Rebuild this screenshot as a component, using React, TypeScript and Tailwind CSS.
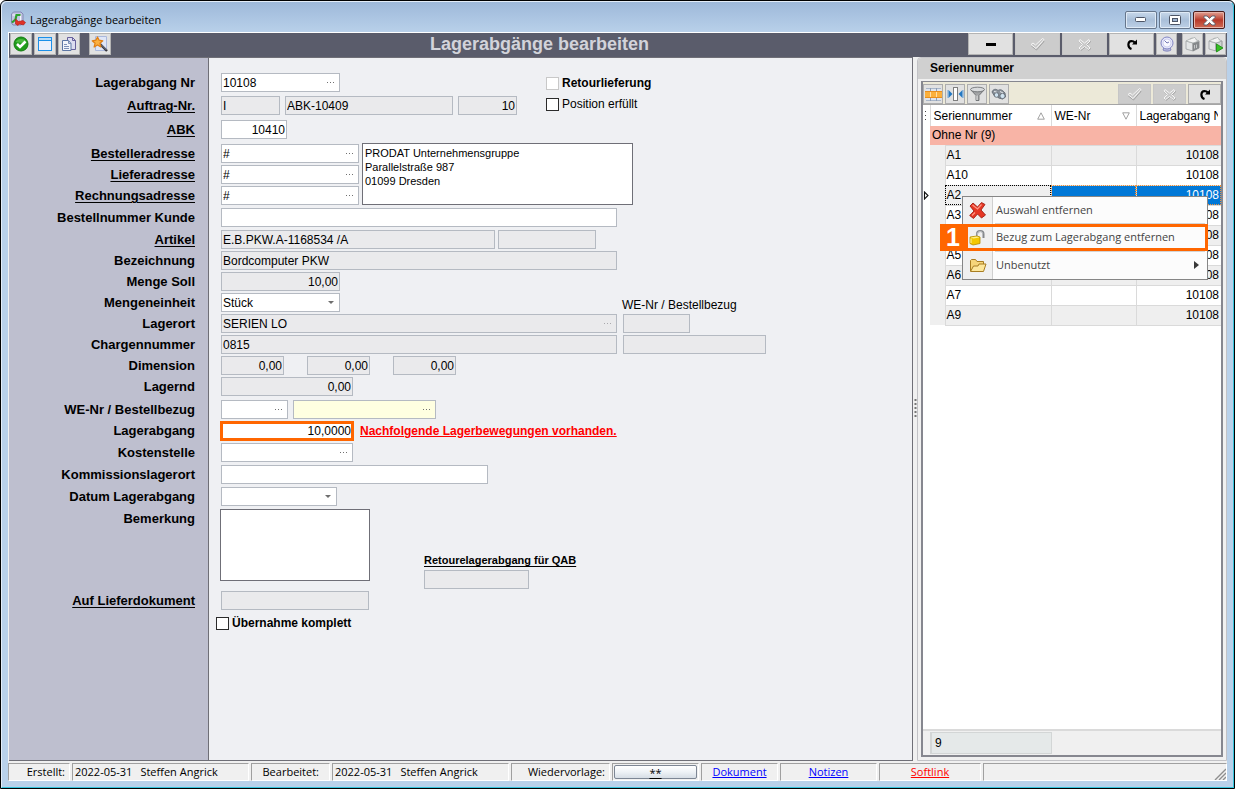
import type { ReactNode } from "react";

const ARIAL = "font-['Liberation_Sans',Arial,sans-serif]";
const SEGOE = "font-['Open_Sans','Segoe_UI',sans-serif]";

/* ---------- icons ---------- */

const AppIcon = () => (
  <svg width="16" height="16" viewBox="0 0 16 16" aria-hidden="true">
    <path d="M1.500 3 3.500 1h7.500l2 2v9.500l-2 1.500H3l-1.500-2z" fill="#c3c6e2" stroke="#8388b4" />
    <path d="M2.500 4h8v9" fill="none" stroke="#f4f4fb" />
    <path d="M2 11.500 5.500 8.500 6.500 4h4" fill="none" stroke="#2da12d" strokeWidth="2.200" />
    <path d="M5.500 13V8l3 2.500 4.500-1 2.500 2-2 2.500-4-1-1.500 1.500z" fill="#e03226" stroke="#a81a12" strokeWidth=".6" />
  </svg>
);
const OkIcon = () => (
  <svg width="16" height="16" viewBox="0 0 16 16" aria-hidden="true">
    <circle cx="8" cy="8" r="7" fill="#1f9c1a" stroke="#137a10" />
    <path d="M2.500 6a6 5 0 0 1 11 0 14 9 0 0 1-11 0z" fill="#5cc84e" opacity=".7" />
    <path d="m4 8 3 3 5.500-5.500" fill="none" stroke="#fff" strokeWidth="2.600" />
  </svg>
);
const WindowIcon = () => (
  <svg width="16" height="16" viewBox="0 0 16 16" aria-hidden="true">
    <rect x="1.500" y="1.500" width="13" height="13" fill="#eceffb" stroke="#1c8fe8" />
    <path d="M2 2h12v2H2z" fill="#b8dcf8" />
    <path d="M2 4.500h12" stroke="#1c8fe8" />
  </svg>
);
const CopyIcon = () => (
  <svg width="16" height="16" viewBox="0 0 16 16" aria-hidden="true">
    <path d="M6.500 1.500h5l3 3v9h-8z" fill="#dcdcf0" stroke="#67619c" />
    <path d="M11.500 1.500v3h3" fill="none" stroke="#67619c" />
    <path d="M1.500 4.500h6l2.500 3v7H1.500z" fill="#f2f5fb" stroke="#5d76a4" />
    <path d="M7.500 4.500v3H10M3 8.500h3M3 10.500h5M3 12.500h5" fill="none" stroke="#7c90b8" />
  </svg>
);
const WizardIcon = () => (
  <svg width="18" height="18" viewBox="0 0 18 18" aria-hidden="true">
    <path d="M4.500 1.500h11v14h-11z" fill="#dfe6f7" stroke="#aab8dc" />
    <path d="m9 9 7 7" stroke="#33333b" strokeWidth="2.400" />
    <path d="m10 9.500 5.500 5.500" stroke="#a5a9b4" strokeWidth=".7" />
    <path d="m6.500 2 1.500 3.100 3.800.7-2.900 2.400 1 3.800-3.400-2.100L3.100 12l1-3.800-2.900-2.400 3.800-.7z" fill="#fbb040" stroke="#e07f14" strokeWidth="1.200" strokeLinejoin="round" />
  </svg>
);
const CheckOutline = () => (
  <svg width="15" height="14" viewBox="0 0 15 14" aria-hidden="true">
    <path d="m1.500 8 2-1.500 2.500 2 6.500-6 1.500 1L6.500 12z" fill="none" stroke="#a2a2a2" transform="translate(0 1)" />
    <path d="m1 7.500 2-1.500 2.500 2L12.500 1.500l1.500 1L6 11.500z" fill="#c7c7c7" stroke="#f6f6f6" />
  </svg>
);
const CrossOutline = () => (
  <svg width="13" height="13" viewBox="0 0 13 13" aria-hidden="true">
    <path d="M2 1.500 6.500 5 11 1.500l1 1.500-3.500 3.500L12 10l-1.500 1.500-4-3-4 3L1 10l3.500-3.500L1 3z" fill="#c5c5c5" stroke="#a2a2a2" transform="translate(.5 .8)" />
    <path d="M2 1.500 6.500 5 11 1.500l1 1.500-3.500 3.500L12 10l-1.500 1.500-4-3-4 3L1 10l3.500-3.500L1 3z" fill="#c9c9c9" stroke="#f6f6f6" />
  </svg>
);
const RefreshIcon = () => (
  <svg width="12" height="12" viewBox="0 0 12 12" aria-hidden="true">
    <path d="M5.500 11C1.200 9.500 1.500 3.200 5.500 3c1.400 0 2.400.4 3.200 1.500" fill="none" stroke="#000" strokeWidth="2.200" />
    <path d="M11 1.500v5H6z" fill="#000" />
  </svg>
);
const ClockIcon = () => (
  <svg width="16" height="16" viewBox="0 0 16 16" aria-hidden="true">
    <path d="M4 14c2 1.500 6 1.500 8 0l-1-2.500H5z" fill="#b9bbe0" stroke="#8286bd" />
    <circle cx="8" cy="7" r="6" fill="#e6e7fa" stroke="#8286c4" />
    <circle cx="8" cy="7" r="4" fill="#f8f8ff" stroke="#c2c4ea" strokeWidth=".7" />
    <path d="M5.500 4.500 8 7l2-1" fill="none" stroke="#5156a0" strokeWidth=".8" />
  </svg>
);
const BoxIcon = ({ arrow = false }: { arrow?: boolean }) => (
  <svg width="17" height="17" viewBox="0 0 17 17" aria-hidden="true">
    <path d="m2 5 7 2v8l-7-2z" fill="#e3e5e6" stroke="#9ca0a2" strokeWidth=".8" />
    <path d="m9 7 6-2v7l-6 3z" fill={arrow ? "#cfd6d3" : "#85898b"} stroke="#808486" strokeWidth=".8" />
    <path d="m2 5 6-3 7 3-6 2z" fill="#f2f3f3" stroke="#a5a9aa" strokeWidth=".8" />
    <path d="m6 3 5-1.500 1.500 2.500" fill="#fff" stroke="#a5a9aa" strokeWidth=".8" />
    <path d="M10.500 9v3.500M12.500 8.500V12" stroke="#d5d7d8" strokeWidth=".8" />
    {arrow && <path d="m9.500 8 6.500 4-6.500 4z" fill="#37c024" stroke="#158a0c" strokeWidth=".8" />}
  </svg>
);
const GridIcon = () => (
  <svg width="17" height="15" viewBox="0 0 17 15" aria-hidden="true">
    <path d="M1 1h15v13H1z" fill="#dfe5ee" />
    <path d="M1 1.500h15M1 13.500h15" stroke="#a9b6c9" />
    <path d="M5.500 1v3M11.500 1v3M5.500 11v3M11.500 11v3" stroke="#8d9db5" />
    <path d="M0 4h17v7H0z" fill="#fbb03c" />
    <path d="M5.500 5v5M11.500 5v5" stroke="#ffe0a8" />
    <path d="M0 4.500h17M0 10.500h17" stroke="#e88f1f" />
  </svg>
);
const ColumnIcon = () => (
  <svg width="17" height="16" viewBox="0 0 17 16" aria-hidden="true">
    <rect x="6.500" y="1.500" width="4" height="13" fill="#fff" stroke="#7e7e7e" />
    <path d="M1.500 4v8l4-4zM15.500 4v8l-4-4z" fill="#2478c2" />
    <path d="M1 4v8M16 4v8" stroke="#6ea6d8" />
  </svg>
);
const FunnelIcon = () => (
  <svg width="17" height="16" viewBox="0 0 17 16" aria-hidden="true">
    <path d="m2 4 5 5.500v5h3v-5L15 4z" fill="#a2a4a6" stroke="#626568" strokeWidth=".8" />
    <path d="M8 9.500V14" stroke="#eee" />
    <ellipse cx="8.500" cy="3.500" rx="7" ry="2.300" fill="#d9dbdd" stroke="#626568" strokeWidth=".8" />
  </svg>
);
const BinocularIcon = () => (
  <svg width="16" height="14" viewBox="0 0 16 14" aria-hidden="true">
    <path d="M1 5c1-3 4-3.500 6-1.500 2-1.500 4-1 7 2.500l.5 4-3 2-4-1-2-2.500-2 .5z" fill="#8b929b" stroke="#59616b" strokeWidth=".8" />
    <circle cx="5.500" cy="8" r="2.300" fill="#cfe2f0" stroke="#59616b" strokeWidth=".8" />
    <circle cx="11.500" cy="9" r="2.600" fill="#cfe2f0" stroke="#59616b" strokeWidth=".8" />
    <path d="m3 4.500 2.500.5M9 4.500l3 1.500" stroke="#e2e6ea" />
  </svg>
);
const DeleteIcon = () => (
  <svg width="17" height="17" viewBox="0 0 17 17" aria-hidden="true">
    <path d="M4 1 8.500 5l4-4.500 3.500 2-4 5.500 4.500 5-4 3-4-4L4.500 16.500.7 13.500 5 9 1 4z" fill="#e63724" stroke="#9f1f14" strokeWidth=".9" strokeLinejoin="round" />
    <path d="m3.500 3 5 4 4-4.500M3 13.500l3-3" fill="none" stroke="#ff9684" strokeWidth="1.200" />
  </svg>
);
const UnlockIcon = () => (
  <svg width="17" height="17" viewBox="0 0 17 17" aria-hidden="true">
    <path d="M8 8V5c0-4 6.500-4 6.500 0v4" fill="none" stroke="#85888c" strokeWidth="2" />
    <path d="M8.300 8V5c0-3 5-3.500 5.500-.5" fill="none" stroke="#dfe1e3" strokeWidth=".7" />
    <path d="m1 8 7-1 3 1v6.500L4 16l-3-1.500z" fill="#f4c800" stroke="#b38a00" strokeWidth=".8" />
    <path d="m1.500 8.500 6.500-1 2.500 1L4.500 9.500z" fill="#fff08a" />
    <path d="M2 9.500v4.500" stroke="#fff3a0" />
  </svg>
);
const FolderIcon = () => (
  <svg width="18" height="15" viewBox="0 0 18 15" aria-hidden="true">
    <path d="M1.500 13V2.500l1-1h4l1.500 2h6.500V6" fill="#f6d57a" stroke="#a87d22" />
    <path d="M1.500 13.500 4.500 8H9l1-2h7l-2.500 7.500z" fill="#fde79c" stroke="#a87d22" />
  </svg>
);
const Dots = ({ light = false }: { light?: boolean }) => (
  <svg width="7" height="1" viewBox="0 0 7 1" aria-hidden="true" className={light ? "text-[#a9a9ad]" : "text-[#707070]"}>
    <path d="M0 0h1v1H0zM3 0h1v1H3zM6 0h1v1H6z" fill="currentColor" />
  </svg>
);

/* ---------- form controls ---------- */

type FieldProps = {
  id?: string;
  label: string;
  width: string;
  value?: string;
  locked?: boolean;
  right?: boolean;
  lookup?: boolean;
  tone?: "yellow" | "marked";
};

function Field({ id, label, width, value = "", locked, right, lookup, tone }: FieldProps) {
  const skin =
    tone === "marked"
      ? "-ml-px h-5 border-[3px] border-[#ff6600] bg-white"
      : tone === "yellow"
        ? "h-[19px] border border-[#b5bac2] bg-[#ffffe1]"
        : locked
          ? "h-[19px] border border-[#b5bac2] bg-[#eaeaec]"
          : "h-[19px] border border-[#b5bac2] bg-white";
  return (
    <div className={`flex shrink-0 items-center ${skin} ${width}`}>
      <input
        id={id}
        aria-label={id ? undefined : label}
        defaultValue={value}
        readOnly={locked}
        className={`h-full w-0 min-w-0 flex-1 bg-transparent text-xs outline-none ${tone === "marked" ? "pr-0" : "px-px"} ${right ? "text-right" : ""}`}
      />
      {lookup && (
        <button type="button" aria-label={`${label} suchen`} className="flex h-full w-3 items-center">
          <Dots light={locked} />
        </button>
      )}
    </div>
  );
}

function Combo({ id, width, value }: { id: string; width: string; value: string }) {
  return (
    <div className={`relative flex h-[19px] shrink-0 items-center border border-[#b5bac2] bg-white ${width}`}>
      <select id={id} defaultValue={value} className="h-full w-full appearance-none bg-transparent px-px text-xs outline-none">
        <option>{value}</option>
      </select>
      <svg width="6" height="3" viewBox="0 0 6 3" aria-hidden="true" className="pointer-events-none absolute right-[5px]">
        <path d="M0 0h6L3 3z" fill="#6e6e6e" />
      </svg>
    </div>
  );
}

function Row({ label, target, link, height, children }: { label?: string; target?: string; link?: boolean; height: string; children?: ReactNode }) {
  return (
    <div className={`flex ${height}`}>
      <div className="w-[200px] shrink-0 border-r border-[#6f6f77] bg-[#bebfcf] pt-px pr-[13px] text-right text-[13px] leading-5 font-bold">
        {label && (
          <label htmlFor={target} className={link ? "underline underline-offset-2" : ""}>
            {label}
          </label>
        )}
      </div>
      <div className="flex min-w-0 flex-1 items-start pt-px pl-3">{children}</div>
    </div>
  );
}

function Tick({ id, label, dim, style }: { id: string; label: string; dim?: boolean; style: string }) {
  return (
    <div className="flex items-center gap-[3px]">
      <input id={id} type="checkbox" className={`size-[13px] shrink-0 appearance-none border bg-white ${dim ? "border-[#c8c8c8]" : "border-[#2b2b2b]"}`} />
      <label htmlFor={id} className={`whitespace-nowrap ${style}`}>
        {label}
      </label>
    </div>
  );
}

function Form() {
  return (
    <form className="flex min-w-0 flex-1 flex-col border-t border-r border-b border-[#6f6f77] bg-[#eff0f3]">
      <Row height="h-3.5" />
      <Row label="Lagerabgang Nr" target="nr" height="h-[23px]">
        <Field id="nr" label="Lagerabgang Nr" width="w-[119px]" value="10108" lookup />
        <div className="ml-[206px] pt-1">
          <Tick id="retour" label="Retourlieferung" dim style="text-xs leading-[13px] font-bold" />
        </div>
      </Row>
      <Row label="Auftrag-Nr." target="auftrag" link height="h-6">
        <div className="flex gap-[5px]">
          <Field id="auftrag" label="Auftrag-Nr." width="w-[59px]" value="I" locked />
          <Field label="Auftrag" width="w-[168px]" value="ABK-10409" locked />
          <Field label="Position" width="w-[59px]" value="10" locked right />
        </div>
        <div className="ml-[29px] pt-0.5">
          <Tick id="erfuellt" label="Position erfüllt" style="text-xs leading-[13px]" />
        </div>
      </Row>
      <Row label="ABK" target="abk" link height="h-6">
        <Field id="abk" label="ABK" width="w-[66px]" value="10410" right />
      </Row>
      <div className="relative flex flex-col">
        <Row label="Bestelleradresse" target="besteller" link height="h-[21px]">
          <Field id="besteller" label="Bestelleradresse" width="w-[138px]" value="#" lookup />
        </Row>
        <Row label="Lieferadresse" target="liefer" link height="h-[21px]">
          <Field id="liefer" label="Lieferadresse" width="w-[138px]" value="#" lookup />
        </Row>
        <Row label="Rechnungsadresse" target="rechnung" link height="h-[22px]">
          <Field id="rechnung" label="Rechnungsadresse" width="w-[138px]" value="#" lookup />
        </Row>
        <textarea
          aria-label="Adresse"
          className="absolute top-0 left-[353px] h-[62px] w-[271px] resize-none border border-[#6f6f77] bg-white p-0.5 text-[11px] leading-[14px] outline-none"
          defaultValue={"PRODAT Unternehmensgruppe\nParallelstraße 987\n01099 Dresden"}
        />
      </div>
      <Row label="Bestellnummer Kunde" target="kunde" height="h-[22px]">
        <Field id="kunde" label="Bestellnummer Kunde" width="w-[396px]" />
      </Row>
      <Row label="Artikel" target="artikel" link height="h-[21px]">
        <div className="flex gap-[3px]">
          <Field id="artikel" label="Artikel" width="w-[274px]" value="E.B.PKW.A-1168534 /A" locked />
          <Field label="Index" width="w-[98px]" locked />
        </div>
      </Row>
      <Row label="Bezeichnung" target="bez" height="h-[21px]">
        <Field id="bez" label="Bezeichnung" width="w-[396px]" value="Bordcomputer PKW" locked />
      </Row>
      <Row label="Menge Soll" target="soll" height="h-[21px]">
        <Field id="soll" label="Menge Soll" width="w-[119px]" value="10,00" locked right />
      </Row>
      <Row label="Mengeneinheit" target="einheit" height="h-[21px]">
        <Combo id="einheit" width="w-[119px]" value="Stück" />
        <label htmlFor="bezug1" className="ml-[282px] pt-1 text-xs leading-4">
          WE-Nr / Bestellbezug
        </label>
      </Row>
      <Row label="Lagerort" target="ort" height="h-[21px]">
        <div className="flex gap-1.5">
          <Field id="ort" label="Lagerort" width="w-[396px]" value="SERIEN LO" locked lookup />
          <Field id="bezug1" label="WE-Nr" width="w-[67px]" locked />
        </div>
      </Row>
      <Row label="Chargennummer" target="charge" height="h-[21px]">
        <div className="flex gap-1.5">
          <Field id="charge" label="Chargennummer" width="w-[396px]" value="0815" locked />
          <Field label="Bestellbezug" width="w-[143px]" locked />
        </div>
      </Row>
      <Row label="Dimension" target="dim" height="h-[21px]">
        <div className="flex gap-[23px]">
          <Field id="dim" label="Länge" width="w-[63px]" value="0,00" locked right />
          <Field label="Breite" width="w-[63px]" value="0,00" locked right />
          <Field label="Höhe" width="w-[63px]" value="0,00" locked right />
        </div>
      </Row>
      <Row label="Lagernd" target="lagernd" height="h-[23px]">
        <Field id="lagernd" label="Lagernd" width="w-[132px]" value="0,00" locked right />
      </Row>
      <Row label="WE-Nr / Bestellbezug" target="wenr" height="h-[21px]">
        <div className="flex gap-[5px]">
          <Field id="wenr" label="WE-Nr" width="w-[67px]" lookup />
          <Field label="Bestellbezug" width="w-[143px]" lookup tone="yellow" />
        </div>
      </Row>
      <Row label="Lagerabgang" target="abgang" height="h-[22px]">
        <Field id="abgang" label="Lagerabgang" width="w-[134px]" value="10,0000" right tone="marked" />
        <a href="#bewegungen" className="ml-1.5 text-xs leading-5 font-bold text-[#ff0000] underline underline-offset-1">
          Nachfolgende Lagerbewegungen vorhanden.
        </a>
      </Row>
      <Row label="Kostenstelle" target="kosten" height="h-[22px]">
        <Field id="kosten" label="Kostenstelle" width="w-[132px]" lookup />
      </Row>
      <Row label="Kommissionslagerort" target="komm" height="h-[22px]">
        <Field id="komm" label="Kommissionslagerort" width="w-[267px]" />
      </Row>
      <Row label="Datum Lagerabgang" target="datum" height="h-[22px]">
        <Combo id="datum" width="w-[116px]" value="" />
      </Row>
      <Row label="Bemerkung" target="bemerkung" height="h-[82px]">
        <textarea id="bemerkung" className="-ml-px h-[72px] w-[150px] shrink-0 resize-none border border-[#6f6f77] bg-white outline-none" />
        <div className="ml-[54px] flex flex-col gap-0.5 pt-[43px]">
          <label htmlFor="qab" className="text-[11px] leading-4 font-bold underline underline-offset-2">
            Retourelagerabgang für QAB
          </label>
          <Field id="qab" label="Retourelagerabgang" width="w-[105px]" locked />
        </div>
      </Row>
      <Row label="Auf Lieferdokument" target="doku" link height="h-[25px]">
        <Field id="doku" label="Auf Lieferdokument" width="w-[148px]" locked />
      </Row>
      <Row height="min-h-6 flex-1">
        <div className="-ml-[5px] pt-px">
          <Tick id="komplett" label="Übernahme komplett" style="text-xs leading-[13px] font-bold" />
        </div>
      </Row>
    </form>
  );
}

/* ---------- serial number panel ---------- */

const serials = ["A1", "A10", "A2", "A3", "A4", "A5", "A6", "A7", "A9"];

function SmallButton({ label, children, width = "w-5", muted }: { label: string; children: ReactNode; width?: string; muted?: boolean }) {
  return (
    <button
      type="button"
      aria-label={label}
      disabled={muted}
      className={`flex h-5 items-center justify-center border ${width} ${muted ? "border-[#c6c6c6] bg-[#cccccc]" : "border-[#adadad] bg-[#e1e1e1]"}`}
    >
      {children}
    </button>
  );
}

function MenuItem({ icon, label, last, submenu }: { icon: ReactNode; label: string; last?: boolean; submenu?: boolean }) {
  return (
    <button type="button" role="menuitem" className="flex flex-1 items-stretch text-left">
      <span className="flex w-[30px] items-center justify-center border-r border-[#cfcfcf] bg-[#f0f0f0]">{icon}</span>
      <span className={`mr-0.5 ml-0.5 flex flex-1 items-center justify-between border-b pr-1.5 pl-px whitespace-nowrap ${last ? "border-transparent" : "border-[#d4d4d4]"}`}>
        {label}
        {submenu && (
          <svg width="5" height="8" viewBox="0 0 5 8" aria-hidden="true">
            <path d="M0 0v8l5-4z" fill="#3a3a3a" />
          </svg>
        )}
      </span>
    </button>
  );
}

function ContextMenu() {
  return (
    <div className={`absolute top-[91px] left-[39px] z-10 h-[84px] w-[246px] border border-[#868686] bg-[#fcfcfc] text-[11px] text-[#444444] ${SEGOE}`} role="menu">
      <div className="flex h-full flex-col">
        <MenuItem icon={<DeleteIcon />} label="Auswahl entfernen" />
        <MenuItem icon={<UnlockIcon />} label="Bezug zum Lagerabgang entfernen" />
        <MenuItem icon={<FolderIcon />} label="Unbenutzt" last submenu />
      </div>
      <div className={`pointer-events-none absolute top-[27px] -left-[23px] flex w-[268px] ${ARIAL}`}>
        <span className="flex h-[27px] w-[26px] items-center justify-center bg-[#ff6600] text-[25px] leading-none font-bold text-white">1</span>
        <span className="-ml-px h-[27px] flex-1 border-[3px] border-[#ff6600]" />
      </div>
    </div>
  );
}

function SerialPanel() {
  return (
    <section className="flex w-[310px] shrink-0 flex-col rounded-t-sm border border-[#c2c2c6] bg-[#f0f0f0]">
      <h2 className="rounded-t-sm bg-[#d0d0d0] pl-3 text-xs leading-[21px] font-bold">Seriennummer</h2>
      <div className="mx-[3px] mt-0.5 mb-[3px] flex flex-1 flex-col border-2 border-t border-[#86878f] bg-white">
        <div className="flex gap-0.5 bg-[#ece9d8] pt-0.5">
          <SmallButton label="Spalten"><GridIcon /></SmallButton>
          <SmallButton label="Spaltenbreite"><ColumnIcon /></SmallButton>
          <SmallButton label="Filter"><FunnelIcon /></SmallButton>
          <SmallButton label="Suchen"><BinocularIcon /></SmallButton>
          <div className="flex-1" />
          <SmallButton label="Übernehmen" width="w-[33px]" muted><CheckOutline /></SmallButton>
          <SmallButton label="Verwerfen" width="w-[33px]" muted><CrossOutline /></SmallButton>
          <SmallButton label="Aktualisieren" width="w-[33px]"><RefreshIcon /></SmallButton>
        </div>
        <div className="relative flex flex-1 flex-col border-t border-[#a5a5a5]">
          <table className="w-full table-fixed border-collapse text-xs">
            <colgroup>
              <col className="w-[7px]" />
              <col className="w-[15px]" />
              <col className="w-[106px]" />
              <col className="w-[85px]" />
              <col />
            </colgroup>
            <thead>
              <tr className="h-[21px] text-left">
                <th scope="col" aria-label="Zeiger" className="p-0">
                  <svg width="1" height="9" viewBox="0 0 1 9" aria-hidden="true" className="ml-0.5">
                    <path d="M0 0h1v1H0zM0 4h1v1H0zM0 8h1v1H0z" fill="#444" />
                  </svg>
                </th>
                <th scope="col" colSpan={2} className="border-x border-[#dadada] p-0 pl-[3px] font-normal">
                  <span className="flex items-center justify-between pr-1.5">
                    Seriennummer
                    <svg width="8" height="8" viewBox="0 0 8 8" aria-hidden="true">
                      <path d="M.7 7.200h6.600L4 .8z" fill="none" stroke="#8a8a8a" strokeWidth=".8" />
                    </svg>
                  </span>
                </th>
                <th scope="col" className="border-r border-[#dadada] p-0 pl-[3px] font-normal">
                  <span className="flex items-center justify-between pr-1.5">
                    WE-Nr
                    <svg width="8" height="8" viewBox="0 0 8 8" aria-hidden="true">
                      <path d="M.7.8h6.600L4 7.200z" fill="none" stroke="#8a8a8a" strokeWidth=".8" />
                    </svg>
                  </span>
                </th>
                <th scope="col" className="p-0 pl-[3px] font-normal">
                  <span className="mr-[3px] block overflow-hidden whitespace-nowrap">Lagerabgang Nr</span>
                </th>
              </tr>
            </thead>
            <tbody>
              <tr className="h-[19px]">
                <td className="p-0" />
                <td colSpan={4} className="bg-[#f8b4a6] p-0 pl-0.5">Ohne Nr (9)</td>
              </tr>
              {serials.map((serial, i) => {
                const active = serial === "A2";
                const shade = i % 2 === 0 ? "bg-[#efefef]" : "bg-white";
                const cell = active ? "bg-[#0078d7] text-white outline-1 -outline-offset-1 outline-dotted outline-[#f0913a]" : shade;
                return (
                  <tr key={serial} className="h-5">
                    <td className="p-0">
                      {active && (
                        <svg width="6" height="9" viewBox="0 0 6 9" aria-hidden="true">
                          <path d="M1.500 1v7L5 4.500z" fill="#fff" stroke="#111" strokeWidth="1.100" />
                        </svg>
                      )}
                    </td>
                    <td className="bg-[#efefef] p-0" />
                    <td className={`border border-[#dadada] p-0 pl-px ${active ? "bg-[#efefef] outline-1 -outline-offset-1 outline-dotted outline-black" : shade}`}>{serial}</td>
                    <td className={`border border-[#dadada] p-0 ${cell}`} />
                    <td className={`border border-r-0 border-[#dadada] p-0 pr-0.5 text-right ${cell}`}>10108</td>
                  </tr>
                );
              })}
            </tbody>
          </table>
          <ContextMenu />
          <div className="mt-auto flex h-[26px] border-t-2 border-[#dadada] bg-[#f0f0f0] pl-[7px]">
            <output className="my-px block w-[122px] border border-l-2 border-[#d3d6d6] bg-[#e5e9e9] pl-[3px] text-xs leading-5">9</output>
          </div>
        </div>
      </div>
    </section>
  );
}

/* ---------- window chrome ---------- */

function CaptionButton({ label, close, children }: { label: string; close?: boolean; children: ReactNode }) {
  return (
    <button
      type="button"
      aria-label={label}
      className={`flex h-[18px] w-8 items-center justify-center rounded-xs border ${
        close
          ? "border-[#4a1c1c] bg-linear-to-b from-[#e0a094] via-[#b8382a] via-50% to-[#cf6a55] shadow-[inset_0_0_0_1px_#e8b4aa]"
          : "border-[#66768c] bg-linear-to-b from-[#c8d8ea] via-[#a9bfd9] via-50% to-[#bdd0e6] shadow-[inset_0_0_0_1px_#dfeaf6]"
      }`}
    >
      {children}
    </button>
  );
}

function TitleBar() {
  return (
    <header className="flex h-[30px] items-center gap-1 pr-0.5 pl-0.5">
      <span className="pt-1">
        <AppIcon />
      </span>
      <span className={`flex-1 pt-1.5 text-[11px] ${SEGOE}`}>Lagerabgänge bearbeiten</span>
      <div className="flex gap-0.5 pt-1.5">
        <CaptionButton label="Minimieren">
          <svg width="12" height="6" viewBox="0 0 12 6" aria-hidden="true">
            <rect x=".5" y=".5" width="10" height="4" rx="1" fill="#fff" stroke="#4d5566" />
          </svg>
        </CaptionButton>
        <CaptionButton label="Maximieren">
          <svg width="12" height="10" viewBox="0 0 12 10" aria-hidden="true">
            <rect x=".5" y=".5" width="11" height="9" rx="1" fill="#fff" stroke="#4d5566" />
            <rect x="3.500" y="3.500" width="5" height="3" fill="#9db3cf" stroke="#4d5566" />
          </svg>
        </CaptionButton>
        <CaptionButton label="Schließen" close>
          <svg width="13" height="11" viewBox="0 0 13 11" aria-hidden="true">
            <path d="M1 1h3l2.500 2.500L9 1h3v1.500l-3 3 3 3V10H9L6.500 7.500 4 10H1V8.500l3-3-3-3z" fill="#fff" stroke="#55606f" strokeWidth=".9" />
          </svg>
        </CaptionButton>
      </div>
    </header>
  );
}

function ToolButton({ label, size = "w-[22px]", muted, children }: { label: string; size?: string; muted?: boolean; children: ReactNode }) {
  return (
    <button
      type="button"
      aria-label={label}
      disabled={muted}
      className={`flex h-[22px] shrink-0 items-center justify-center border ${size} ${
        muted ? "border-[#c6c6c6] bg-[#cccccc]" : "border-[#b4b4b4] bg-[#e1e1e1]"
      }`}
    >
      {children}
    </button>
  );
}

function ToolBar() {
  return (
    <div className="flex h-[25px] items-start gap-0.5 border-t border-l border-white bg-[#5a5c6b] px-px">
      <ToolButton label="OK"><OkIcon /></ToolButton>
      <ToolButton label="Fenster"><WindowIcon /></ToolButton>
      <ToolButton label="Kopieren"><CopyIcon /></ToolButton>
      <span className="w-[5px]" />
      <ToolButton label="Assistent"><WizardIcon /></ToolButton>
      <h1 className="min-w-0 flex-1 text-center text-lg leading-[22px] font-bold text-[#d2d3da]">Lagerabgänge bearbeiten</h1>
      <ToolButton label="Löschen" size="w-[45px]">
        <svg width="10" height="3" viewBox="0 0 10 3" aria-hidden="true"><path d="M0 0h10v3H0z" /></svg>
      </ToolButton>
      <ToolButton label="Speichern" size="w-[45px]" muted><CheckOutline /></ToolButton>
      <ToolButton label="Abbrechen" size="w-[45px]" muted><CrossOutline /></ToolButton>
      <ToolButton label="Neu laden" size="w-[45px]"><RefreshIcon /></ToolButton>
      <ToolButton label="Verlauf" size="w-[21px]"><ClockIcon /></ToolButton>
      <span className="w-px" />
      <ToolButton label="Lager" size="w-[21px]"><BoxIcon /></ToolButton>
      <ToolButton label="Lagerbewegung" size="w-[21px]"><BoxIcon arrow /></ToolButton>
    </div>
  );
}

function StatusCell({ width, children, className = "" }: { width: string; children?: ReactNode; className?: string }) {
  return (
    <div className={`flex h-[18px] items-center border border-t-[#a0a0a0] border-r-white border-b-white border-l-[#a0a0a0] whitespace-nowrap ${width} ${className}`}>
      {children}
    </div>
  );
}

function StatusBar() {
  return (
    <footer className={`flex gap-0.5 bg-[#f0f0f0] pt-0.5 text-[11px] leading-4 ${SEGOE}`}>
      <StatusCell width="w-[62px]" className="justify-end pr-1">Erstellt:</StatusCell>
      <StatusCell width="w-[177px]" className="gap-2 pl-0.5"><time>2022-05-31</time><span>Steffen Angrick</span></StatusCell>
      <StatusCell width="w-[79px]" className="justify-end pr-2.5">Bearbeitet:</StatusCell>
      <StatusCell width="w-[177px]" className="gap-2 pl-0.5"><time>2022-05-31</time><span>Steffen Angrick</span></StatusCell>
      <StatusCell width="w-[99px]" className="justify-end pr-1">Wiedervorlage:</StatusCell>
      <StatusCell width="w-[87px]" className="px-px">
        <button type="button" aria-label="Wiedervorlage setzen" className="flex h-3.5 w-full items-center justify-center rounded-xs border border-[#7d8694] bg-linear-to-b from-white via-[#eef2f6] to-[#d6dde5] text-[11px] leading-none underline">
          **
        </button>
      </StatusCell>
      <StatusCell width="w-[77px]" className="justify-center"><a href="#dokument" className="text-[#0000ff] underline">Dokument</a></StatusCell>
      <StatusCell width="w-[97px]" className="justify-center"><a href="#notizen" className="text-[#0000ff] underline">Notizen</a></StatusCell>
      <StatusCell width="w-[102px]" className="justify-center"><a href="#softlink" className="text-[#ff0000] underline">Softlink</a></StatusCell>
      <StatusCell width="min-w-0 flex-1" className="items-end justify-end">
        <svg width="12" height="12" viewBox="0 0 12 12" aria-hidden="true">
          <path d="M1 12 12 1M5 12l7-7M9 12l3-3" stroke="#8e8e8e" strokeWidth="1.400" />
        </svg>
      </StatusCell>
    </footer>
  );
}

export default function App() {
  return (
    <div className={`flex min-h-screen flex-col rounded-t-md border border-black bg-linear-to-b from-[#9db8d9] to-[#b9d1ea] to-[32px] text-black ${ARIAL}`}>
      <div className="flex flex-1 flex-col rounded-t-md border border-t-[#e3edf8] border-r-[#35c4dc] border-b-[#35c4dc] border-l-[#e3edf8] px-1.5 pb-1.5">
        <TitleBar />
        <div className="flex flex-1 flex-col">
          <ToolBar />
          <main className="flex flex-1 bg-[#f0f0f0] pl-px">
            <Form />
            <div className="flex w-1 items-center justify-center">
              <svg width="3" height="20" viewBox="0 0 3 20" aria-hidden="true">
                <path d="M1.500 0v20" stroke="#777" strokeWidth="2" strokeDasharray="2 2" />
              </svg>
            </div>
            <SerialPanel />
          </main>
          <StatusBar />
        </div>
      </div>
    </div>
  );
}
